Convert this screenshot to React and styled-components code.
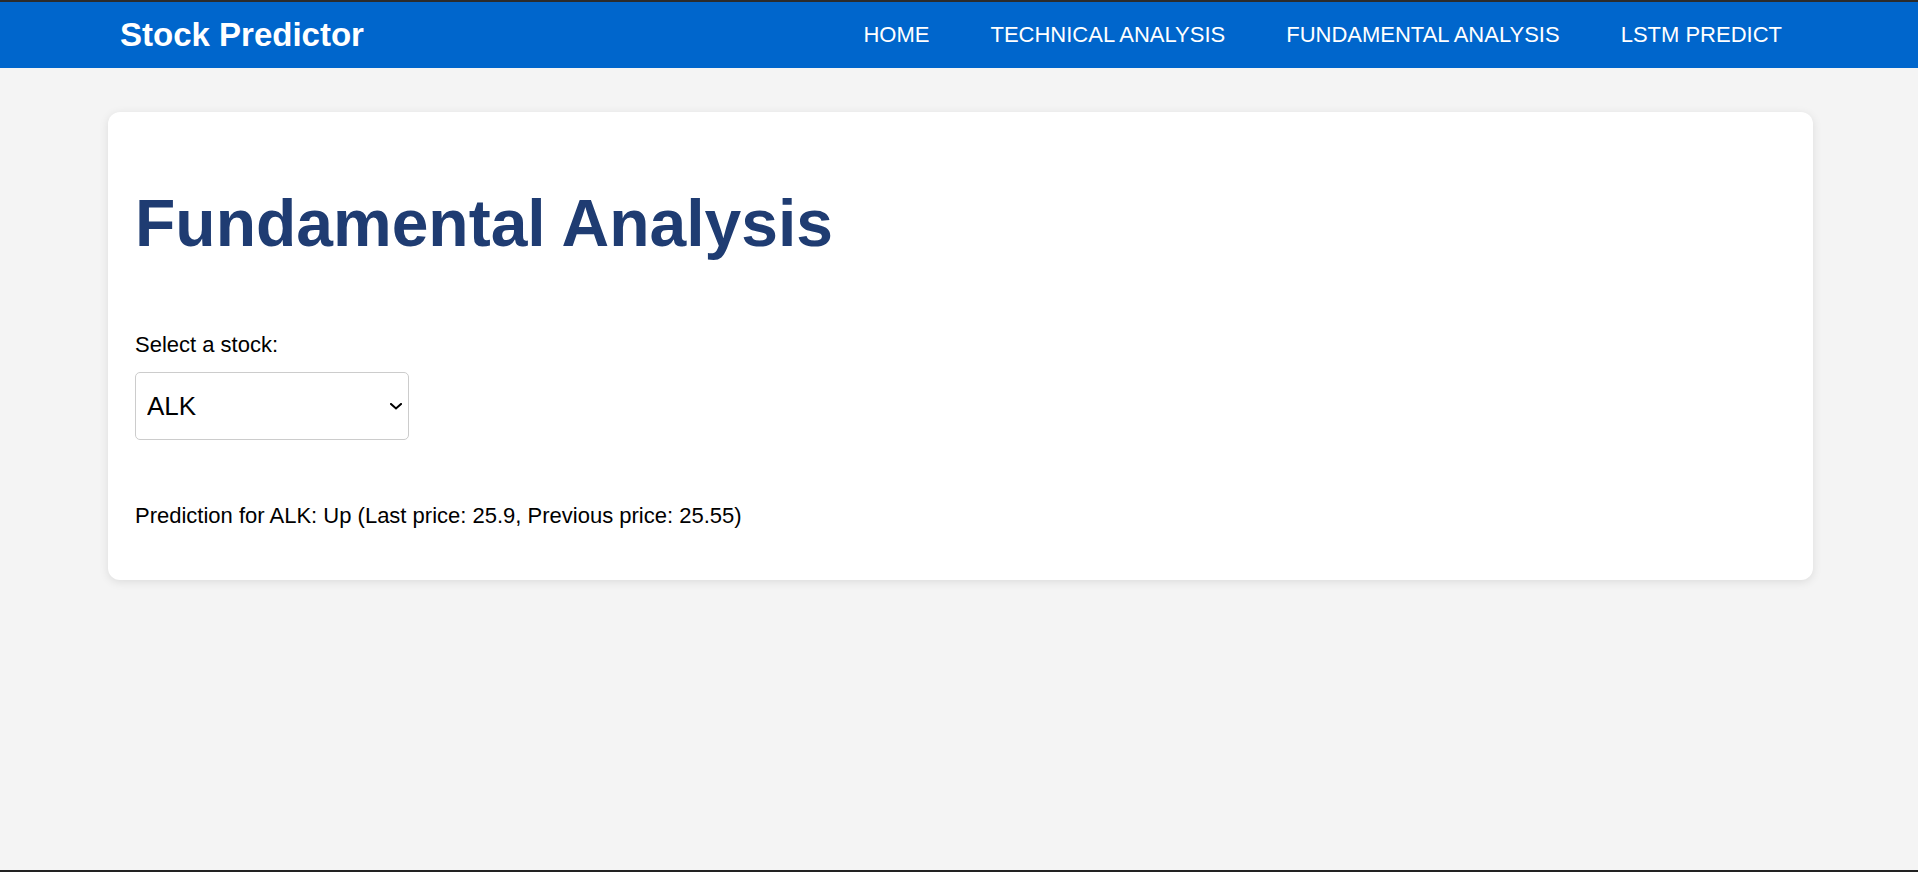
import React, { useState } from "react";
import styled, { createGlobalStyle } from "styled-components";

const GlobalStyle = createGlobalStyle`
  html, body {
    margin: 0;
    padding: 0;
  }
  body {
    font-family: "Liberation Sans", Arial, sans-serif;
    background: #f4f4f4;
  }
  * { box-sizing: border-box; }
`;

const Page = styled.div`
  min-height: 100vh;
  border-top: 2px solid #2b2b2b;
  border-bottom: 2px solid #222222;
  background: #f4f4f4;
  display: flex;
  flex-direction: column;
`;

const Header = styled.header`
  height: 66px;
  background: #0066cc;
  display: flex;
  align-items: center;
  justify-content: space-between;
  padding: 0 121px 0 120px;
`;

const Brand = styled.div`
  color: #ffffff;
  font-size: 33px;
  font-weight: bold;
`;

const Nav = styled.nav`
  display: flex;
  align-items: center;
  gap: 31px;
`;

const NavLink = styled.a`
  color: #ffffff;
  font-size: 22px;
  text-transform: uppercase;
  text-decoration: none;
  padding: 0 15px;
  cursor: pointer;
`;

const Main = styled.main`
  padding: 44px 105px 0 108px;
`;

const Card = styled.section`
  background: #ffffff;
  border-radius: 12px;
  box-shadow: 0 2px 10px rgba(0, 0, 0, 0.1);
  padding: 27px;
`;

const Title = styled.h1`
  margin: 46px 0 71px;
  font-size: 66px;
  font-weight: bold;
  color: #1f3c72;
  line-height: normal;
`;

const Label = styled.label`
  display: block;
  font-size: 22px;
  color: #000000;
  line-height: normal;
`;

const SelectWrap = styled.div`
  position: relative;
  margin-top: 14px;
  width: 274px;
  height: 68px;
`;

const Select = styled.select`
  appearance: none;
  -webkit-appearance: none;
  display: block;
  width: 100%;
  height: 100%;
  padding: 0 30px 0 11px;
  font-family: "Liberation Sans", Arial, sans-serif;
  font-size: 26px;
  color: #000000;
  background: #ffffff;
  border: 1px solid #cccccc;
  border-radius: 5px;
  outline: none;
`;

const Chevron = styled.svg`
  position: absolute;
  right: 7px;
  top: 50%;
  width: 12px;
  height: 7px;
  margin-top: -3px;
  pointer-events: none;
`;

const Prediction = styled.p`
  margin: 63px 0 24px;
  font-size: 22px;
  color: #000000;
  line-height: normal;
`;

const stocks = ["ALK", "KMB", "TEL", "STB", "GRNT"];

export default function App() {
  const [stock, setStock] = useState("ALK");
  return (
    <>
      <GlobalStyle />
      <Page>
        <Header>
          <Brand>Stock Predictor</Brand>
          <Nav>
            <NavLink>Home</NavLink>
            <NavLink>Technical Analysis</NavLink>
            <NavLink>Fundamental Analysis</NavLink>
            <NavLink>LSTM Predict</NavLink>
          </Nav>
        </Header>
        <Main>
          <Card>
            <Title>Fundamental Analysis</Title>
            <Label htmlFor="stock">Select a stock:</Label>
            <SelectWrap>
              <Select id="stock" value={stock} onChange={(e) => setStock(e.target.value)}>
                {stocks.map((s) => (
                  <option key={s} value={s}>{s}</option>
                ))}
              </Select>
              <Chevron viewBox="0 0 12 7" fill="none">
                <path d="M1 1 L6 5.5 L11 1" stroke="#000" strokeWidth="2" strokeLinecap="square" strokeLinejoin="miter" />
              </Chevron>
            </SelectWrap>
            <Prediction>
              Prediction for {stock}: Up (Last price: 25.9, Previous price: 25.55)
            </Prediction>
          </Card>
        </Main>
      </Page>
    </>
  );
}
